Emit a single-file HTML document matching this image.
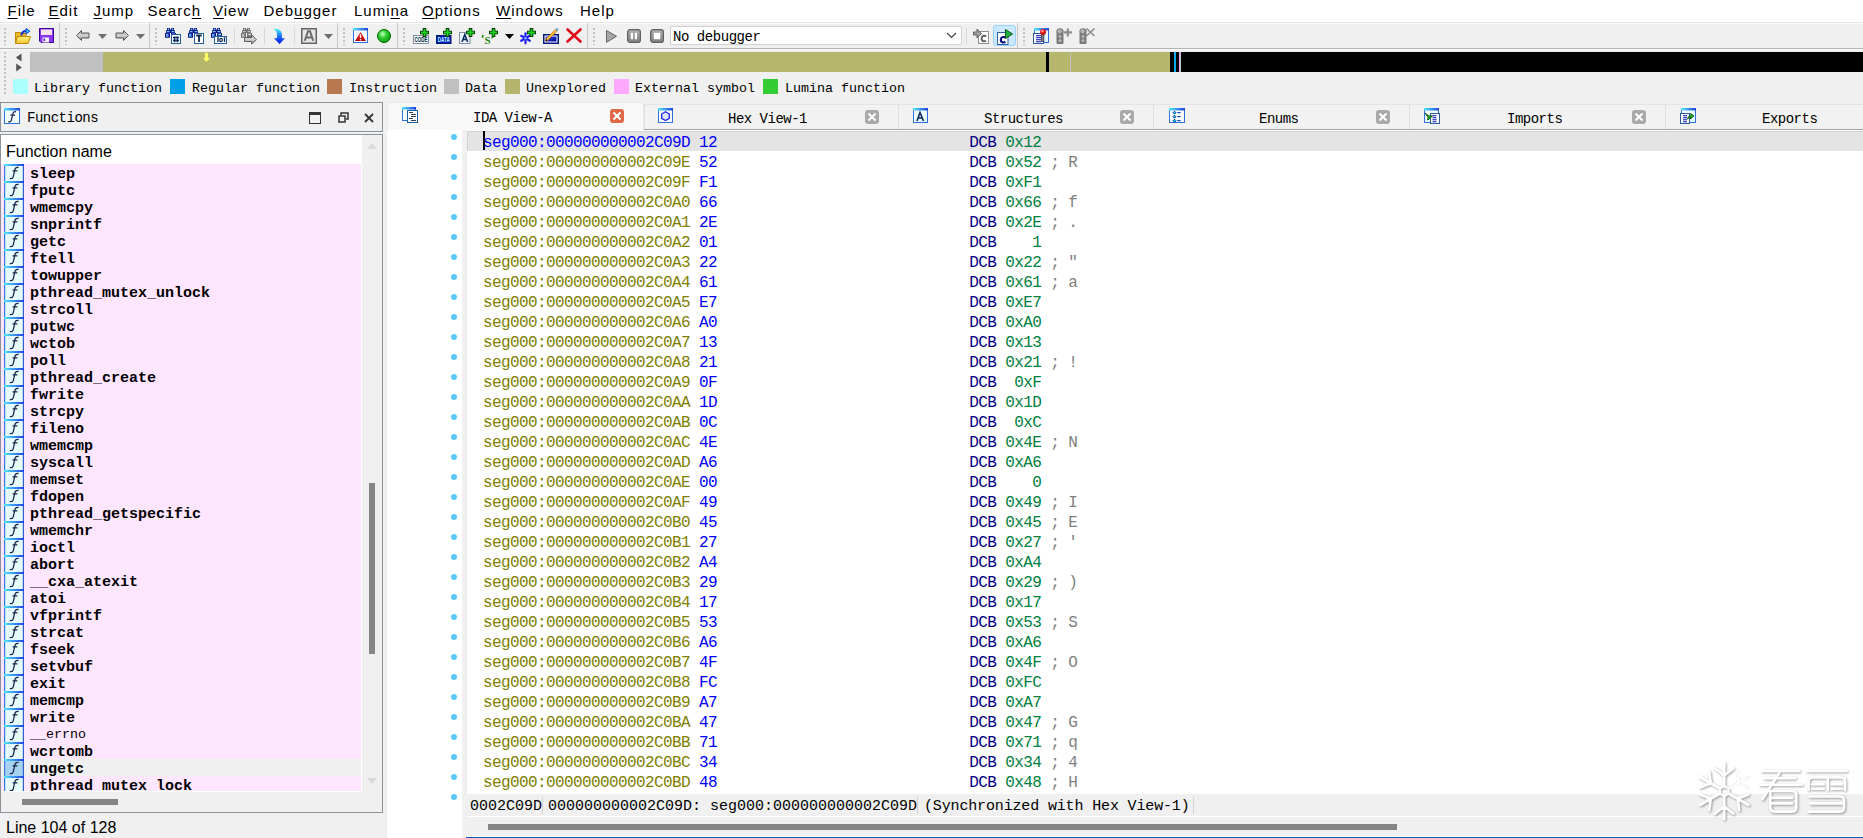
<!DOCTYPE html>
<html><head><meta charset="utf-8"><style>
*{box-sizing:border-box;margin:0;padding:0}
html,body{width:1863px;height:838px;overflow:hidden;background:#f0f0f0;position:relative}
.a{position:absolute}
.sans{font-family:"Liberation Sans",sans-serif}
.mono{font-family:"Liberation Mono",monospace}
.menu{position:absolute;top:0;font:15px/22px "Liberation Sans",sans-serif;letter-spacing:1px;color:#000;white-space:pre}
.menu u{text-decoration:underline;text-underline-offset:2px}
.grip{position:absolute;width:2px;background:repeating-linear-gradient(to bottom,#c2c2c2 0 2px,transparent 2px 4px)}
.sep{position:absolute;width:1px;background:#c8c8c8}
.sep2{position:absolute;width:1px;background:#d8d8d8}
.sq{position:absolute;top:79px;width:15px;height:15px}
.lg{position:absolute;top:80px;font:13.33px/18px "Liberation Mono",monospace;color:#000;white-space:pre}
.frow{position:absolute;left:1px;width:360px;height:17px;background:#ffe6ff}
.fic{position:absolute;left:4px;top:0;width:19px;height:17px;border:1.5px solid #3a78d8;background:linear-gradient(#f4ffff,#d8f4f8)}
.fic i{position:absolute;left:3px;top:-2px;font:italic 15px/17px "Liberation Serif",serif;color:#222}
.ft{position:absolute;left:30px;top:0;font:bold 15px/21px "Liberation Mono",monospace;color:#000;white-space:pre}
.crow{position:absolute;left:467px;width:1396px;height:20px;font:16px/25px "Liberation Mono",monospace;letter-spacing:-0.6px;white-space:pre}
.dot{position:absolute;left:451px;width:6px;height:6px;border-radius:50%;background:#5cc8f8}
.tab{position:absolute;top:104px;height:25px;background:#f2f2f2;border-top:1px solid #e4e4e4}
.tabt{position:absolute;top:0;font:14px/30px "Liberation Mono",monospace;color:#000;white-space:pre;letter-spacing:-0.5px}
.cls{position:absolute;top:6px;width:14px;height:14px;border-radius:3px;background:#a9a9a9}
.cls:before,.cls:after{content:"";position:absolute;left:6px;top:2px;width:2px;height:10px;background:#fff;transform:rotate(45deg)}
.cls:after{transform:rotate(-45deg)}
</style></head><body>

<svg width="0" height="0" style="position:absolute"><defs>
<linearGradient id="gfold" x1="0" y1="0" x2="0" y2="1"><stop offset="0" stop-color="#fff27a"/><stop offset="1" stop-color="#f2c530"/></linearGradient>
<linearGradient id="ggray" x1="0" y1="0" x2="0" y2="1"><stop offset="0" stop-color="#a0a0a0"/><stop offset="0.5" stop-color="#d4d4d4"/><stop offset="1" stop-color="#808080"/></linearGradient>
<linearGradient id="gblue" x1="0" y1="0" x2="0" y2="1"><stop offset="0" stop-color="#40f0ff"/><stop offset="0.5" stop-color="#2070f8"/><stop offset="1" stop-color="#0010e0"/></linearGradient>
<linearGradient id="gtube" x1="0" y1="0" x2="0" y2="1"><stop offset="0" stop-color="#2050b0"/><stop offset="0.6" stop-color="#60b0ff"/><stop offset="1" stop-color="#1030a0"/></linearGradient>
<linearGradient id="gtubeg" x1="0" y1="0" x2="0" y2="1"><stop offset="0" stop-color="#808080"/><stop offset="0.6" stop-color="#d0d0d0"/><stop offset="1" stop-color="#707070"/></linearGradient>
<linearGradient id="gtitle" x1="0" y1="0" x2="1" y2="0"><stop offset="0" stop-color="#50e8ff"/><stop offset="1" stop-color="#2040e0"/></linearGradient>
<linearGradient id="gwin" x1="0" y1="0" x2="1" y2="1"><stop offset="0" stop-color="#ffffff"/><stop offset="1" stop-color="#e0fcff"/></linearGradient>
<radialGradient id="gball" cx="0.4" cy="0.35" r="0.65"><stop offset="0" stop-color="#c8ffc8"/><stop offset="0.45" stop-color="#30d030"/><stop offset="1" stop-color="#10a010"/></radialGradient>
<radialGradient id="gred" cx="0.4" cy="0.35" r="0.65"><stop offset="0" stop-color="#ffd0d0"/><stop offset="0.45" stop-color="#ff2020"/><stop offset="1" stop-color="#c00000"/></radialGradient>
<linearGradient id="gpen" x1="0" y1="0" x2="1" y2="1"><stop offset="0" stop-color="#3050f0"/><stop offset="1" stop-color="#000090"/></linearGradient>
<linearGradient id="gbtn" x1="0" y1="0" x2="0" y2="1"><stop offset="0" stop-color="#b0b0b0"/><stop offset="1" stop-color="#808080"/></linearGradient>
<linearGradient id="gwarn" x1="0" y1="0" x2="0" y2="1"><stop offset="0" stop-color="#ff3030"/><stop offset="1" stop-color="#b00000"/></linearGradient>
</defs></svg>
<div class="a" style="left:0;top:0;width:1863px;height:22px;background:#fff"></div>
<div class="a" style="left:0;top:22px;width:1863px;height:1px;background:#e6e6e6"></div>
<div class="a" style="left:0;top:23px;width:1863px;height:1px;background:#fbfbfb"></div>
<div class="menu" style="left:7.5px"><u>F</u>ile</div>
<div class="menu" style="left:48.5px"><u>E</u>dit</div>
<div class="menu" style="left:93.5px"><u>J</u>ump</div>
<div class="menu" style="left:147.5px">Searc<u>h</u></div>
<div class="menu" style="left:213px"><u>V</u>iew</div>
<div class="menu" style="left:263.5px">Deb<u>u</u>gger</div>
<div class="menu" style="left:354px">Lumi<u>n</u>a</div>
<div class="menu" style="left:422px"><u>O</u>ptions</div>
<div class="menu" style="left:496px"><u>W</u>indows</div>
<div class="menu" style="left:580px">Help</div>
<div class="a" style="left:0;top:48px;width:1863px;height:1px;background:#b4b4b4"></div>
<div class="a" style="left:0;top:49px;width:1863px;height:1px;background:#f8f8f8"></div>
<div class="grip" style="left:4px;top:28px;height:17px"></div>
<div class="grip" style="left:65px;top:28px;height:17px"></div>
<div class="grip" style="left:155px;top:28px;height:17px"></div>
<div class="grip" style="left:343px;top:28px;height:17px"></div>
<div class="grip" style="left:403px;top:28px;height:17px"></div>
<div class="grip" style="left:593px;top:28px;height:17px"></div>
<div class="grip" style="left:1023px;top:28px;height:17px"></div>
<div class="sep" style="left:59px;top:23px;height:25px"></div>
<div class="sep" style="left:149px;top:23px;height:25px"></div>
<div class="sep" style="left:337px;top:23px;height:25px"></div>
<div class="sep" style="left:397px;top:23px;height:25px"></div>
<div class="sep" style="left:587px;top:23px;height:25px"></div>
<div class="sep" style="left:1017px;top:23px;height:25px"></div>
<div class="sep2" style="left:234px;top:28px;height:16px"></div>
<div class="sep2" style="left:264px;top:28px;height:16px"></div>
<div class="sep2" style="left:294px;top:28px;height:16px"></div>
<div class="sep2" style="left:966px;top:28px;height:16px"></div>
<div class="a" style="left:993px;top:25px;width:23px;height:21px;background:#cce8ff;border:1px solid #99d1ff;border-radius:3px"></div>
<svg class="a" style="left:15px;top:28px;overflow:visible" width="16" height="16" viewBox="0 0 16 16"><path d="M0.5 4.5 H5.5 L6.5 5.5 H11 V8.5 H2.5 L0.5 15.5 Z" fill="#eebc28" stroke="#c08800"/><path d="M2.5 8.5 H15.5 L13 15.5 H0.5 Z" fill="url(#gfold)" stroke="#c08800"/><path d="M6.5 7.5 C6.5 4.5 8.5 3 11.5 3" fill="none" stroke="#1030d0" stroke-width="2"/><path d="M11 0.5 L14.8 3.2 L11 6 Z" fill="#30e0ff" stroke="#1030d0" stroke-width="1"/></svg><svg class="a" style="left:39px;top:28px;overflow:visible" width="16" height="16" viewBox="0 0 16 16"><path d="M0.5 0.5 H14.5 V14.5 H2 L0.5 13 Z" fill="#8a38f0" stroke="#3c0098"/><rect x="2" y="1.5" width="11" height="5.5" fill="#f6e4ea"/><rect x="3.5" y="9.5" width="6.5" height="5" fill="#f2f2ff"/><rect x="4.5" y="10.5" width="1.6" height="2.6" fill="#5020c0"/></svg><svg class="a" style="left:76px;top:30px;overflow:visible" width="14" height="11" viewBox="0 0 14 11"><path d="M0.5 5.5 L5.5 0.5 V3 H13 V8 H5.5 V10.5 Z" fill="url(#ggray)" stroke="#5a5a5a"/></svg><svg class="a" style="left:115px;top:30px;overflow:visible" width="14" height="11" viewBox="0 0 14 11"><path d="M13.5 5.5 L8.5 0.5 V3 H1 V8 H8.5 V10.5 Z" fill="url(#ggray)" stroke="#5a5a5a"/></svg><svg class="a" style="left:98px;top:34px;overflow:visible" width="9" height="5" viewBox="0 0 9 5"><path d="M0 0 H9 L4.5 5 Z" fill="#6e6e72"/></svg><svg class="a" style="left:136px;top:34px;overflow:visible" width="9" height="5" viewBox="0 0 9 5"><path d="M0 0 H9 L4.5 5 Z" fill="#6e6e72"/></svg><svg class="a" style="left:324px;top:34px;overflow:visible" width="9" height="5" viewBox="0 0 9 5"><path d="M0 0 H9 L4.5 5 Z" fill="#6e6e72"/></svg><svg class="a" style="left:505px;top:34px;overflow:visible" width="9" height="5" viewBox="0 0 9 5"><path d="M0 0 H9 L4.5 5 Z" fill="#000"/></svg><svg class="a" style="left:165px;top:28px;overflow:visible" width="16" height="16" viewBox="0 0 16 16"><g transform="translate(0,0)"><path d="M2 0 H5 V2.3 H5.3 V4.9 H5 V9.8 H0 V4.9 H1 V2.3 H2 Z" fill="#0c1a88"/><path d="M6 0 H9 V2.3 H10 V4.9 H11 V9.8 H6 V4.9 H6 V2.3 H6 Z" fill="#0c1a88"/><rect x="5" y="1.5" width="1" height="4" fill="#0c1a88"/><circle cx="3.5" cy="1.3" r="0.8" fill="#8cd8ff"/><circle cx="7.5" cy="1.3" r="0.8" fill="#8cd8ff"/><rect x="1.8" y="3.1" width="2.8" height="1.1" fill="#8cd8ff"/><rect x="6.6" y="3.1" width="2.8" height="1.1" fill="#8cd8ff"/><rect x="1" y="5.6" width="2.8" height="3.4" fill="#3060d0"/><rect x="1.4" y="5.8" width="1.2" height="2.6" fill="#8cd8ff"/><rect x="7.4" y="5.6" width="2.6" height="1.8" fill="#8cd8ff"/><circle cx="5.5" cy="5.6" r="0.7" fill="#ffffff"/></g><rect x="6.5" y="6.5" width="9" height="9" fill="#fff" stroke="#1f5f9f"/><path d="M9.6 8.5 V14.3 M12.4 8.5 V14.3 M8 9.6 H14 M8 12.4 H14" stroke="#0a2e60" stroke-width="1.5"/></svg><svg class="a" style="left:188px;top:28px;overflow:visible" width="16" height="16" viewBox="0 0 16 16"><g transform="translate(0,0)"><path d="M2 0 H5 V2.3 H5.3 V4.9 H5 V9.8 H0 V4.9 H1 V2.3 H2 Z" fill="#0c1a88"/><path d="M6 0 H9 V2.3 H10 V4.9 H11 V9.8 H6 V4.9 H6 V2.3 H6 Z" fill="#0c1a88"/><rect x="5" y="1.5" width="1" height="4" fill="#0c1a88"/><circle cx="3.5" cy="1.3" r="0.8" fill="#8cd8ff"/><circle cx="7.5" cy="1.3" r="0.8" fill="#8cd8ff"/><rect x="1.8" y="3.1" width="2.8" height="1.1" fill="#8cd8ff"/><rect x="6.6" y="3.1" width="2.8" height="1.1" fill="#8cd8ff"/><rect x="1" y="5.6" width="2.8" height="3.4" fill="#3060d0"/><rect x="1.4" y="5.8" width="1.2" height="2.6" fill="#8cd8ff"/><rect x="7.4" y="5.6" width="2.6" height="1.8" fill="#8cd8ff"/><circle cx="5.5" cy="5.6" r="0.7" fill="#ffffff"/></g><rect x="6.5" y="5.5" width="9" height="10" fill="#fff" stroke="#1f5f9f"/><path d="M8.3 7.5 H13.7 M11 7.5 V14" stroke="#0a2850" stroke-width="1.8"/></svg><svg class="a" style="left:211px;top:28px;overflow:visible" width="16" height="16" viewBox="0 0 16 16"><g transform="translate(0,0)"><path d="M2 0 H5 V2.3 H5.3 V4.9 H5 V9.8 H0 V4.9 H1 V2.3 H2 Z" fill="#0c1a88"/><path d="M6 0 H9 V2.3 H10 V4.9 H11 V9.8 H6 V4.9 H6 V2.3 H6 Z" fill="#0c1a88"/><rect x="5" y="1.5" width="1" height="4" fill="#0c1a88"/><circle cx="3.5" cy="1.3" r="0.8" fill="#8cd8ff"/><circle cx="7.5" cy="1.3" r="0.8" fill="#8cd8ff"/><rect x="1.8" y="3.1" width="2.8" height="1.1" fill="#8cd8ff"/><rect x="6.6" y="3.1" width="2.8" height="1.1" fill="#8cd8ff"/><rect x="1" y="5.6" width="2.8" height="3.4" fill="#3060d0"/><rect x="1.4" y="5.8" width="1.2" height="2.6" fill="#8cd8ff"/><rect x="7.4" y="5.6" width="2.6" height="1.8" fill="#8cd8ff"/><circle cx="5.5" cy="5.6" r="0.7" fill="#ffffff"/></g><rect x="3.5" y="8.5" width="12" height="7" fill="#fff" stroke="#1f5f9f"/><path d="M6.3 10.5 L7 10 V14 M12.8 10.5 L13.5 10 V14" stroke="#0a2850" stroke-width="1.3" fill="none"/><ellipse cx="10" cy="12" rx="1.3" ry="1.7" fill="none" stroke="#0a2850" stroke-width="1.2"/></svg><svg class="a" style="left:241px;top:28px;overflow:visible" width="16" height="16" viewBox="0 0 16 16"><g transform="translate(0,0)"><path d="M2 0 H5 V2.3 H5.3 V4.9 H5 V9.8 H0 V4.9 H1 V2.3 H2 Z" fill="#6a6a6a"/><path d="M6 0 H9 V2.3 H10 V4.9 H11 V9.8 H6 V4.9 H6 V2.3 H6 Z" fill="#6a6a6a"/><rect x="5" y="1.5" width="1" height="4" fill="#6a6a6a"/><circle cx="3.5" cy="1.3" r="0.8" fill="#d8d8d8"/><circle cx="7.5" cy="1.3" r="0.8" fill="#d8d8d8"/><rect x="1.8" y="3.1" width="2.8" height="1.1" fill="#d8d8d8"/><rect x="6.6" y="3.1" width="2.8" height="1.1" fill="#d8d8d8"/><rect x="1" y="5.6" width="2.8" height="3.4" fill="#9a9a9a"/><rect x="1.4" y="5.8" width="1.2" height="2.6" fill="#d8d8d8"/><rect x="7.4" y="5.6" width="2.6" height="1.8" fill="#d8d8d8"/><circle cx="5.5" cy="5.6" r="0.7" fill="#ffffff"/></g><path d="M3.5 9.5 H10.5 V6.5 L15.5 11.8 L10.5 16 V13.5 H3.5 Z" fill="url(#ggray)" stroke="#606060"/></svg><svg class="a" style="left:273px;top:28px;overflow:visible" width="12" height="16" viewBox="0 0 12 16"><path d="M0.5 0.8 C5.5 0.5 9 2.5 9 7 V10.2 H12 L6.5 16 L0.8 10.2 H4 V7 C4 4.3 3 2.2 0.5 0.8 Z" fill="url(#gblue)"/></svg><svg class="a" style="left:301px;top:28px;overflow:visible" width="16" height="16" viewBox="0 0 16 16"><rect x="0.75" y="0.75" width="14.5" height="14.5" fill="#e6e6e6" stroke="#646464" stroke-width="1.5"/><path d="M3.8 12.8 L7 3.2 H9 L12.2 12.8 M5 9.6 H11" fill="none" stroke="#6a6a6a" stroke-width="2"/></svg><svg class="a" style="left:353px;top:28px;overflow:visible" width="15" height="15" viewBox="0 0 15 15"><rect x="0.5" y="0.5" width="14" height="14" fill="#fff" stroke="#2f6fe0" stroke-width="1"/><rect x="0" y="0" width="15" height="2.5" fill="url(#gtitle)"/><path d="M7.5 4 L13 13 H2 Z" fill="url(#gwarn)"/><path d="M7.5 6.5 V10" stroke="#fff" stroke-width="1.4"/><rect x="6.8" y="11" width="1.4" height="1.4" fill="#fff"/></svg><svg class="a" style="left:377px;top:29px;overflow:visible" width="14" height="14" viewBox="0 0 14 14"><circle cx="7" cy="7" r="6.5" fill="url(#gball)" stroke="#006400" stroke-width="1"/></svg><svg class="a" style="left:413px;top:28px;overflow:visible" width="17" height="16" viewBox="0 0 17 16"><rect x="0.5" y="7.5" width="15" height="8" fill="#f4f8ff" stroke="#8090a0"/><text x="8" y="14.3" font-family="Liberation Sans" font-weight="bold" font-size="7" text-anchor="middle" fill="#002838" textLength="13" lengthAdjust="spacingAndGlyphs">CODE</text><g transform="translate(7,0)"><path d="M4.5 0 V9 M0 4.5 H9" stroke="#003800" stroke-width="3.6"/><path d="M4.5 1 V8 M1 4.5 H8" stroke="#20d020" stroke-width="1.8"/></g></svg><svg class="a" style="left:436px;top:28px;overflow:visible" width="17" height="16" viewBox="0 0 17 16"><rect x="0.5" y="7.5" width="14.5" height="8" fill="#0818c8" stroke="#002060"/><text x="7.8" y="14" font-family="Liberation Sans" font-weight="bold" font-size="7" text-anchor="middle" fill="#b0ffff" textLength="12" lengthAdjust="spacingAndGlyphs">DATA</text><g transform="translate(7,0)"><path d="M4.5 0 V9 M0 4.5 H9" stroke="#003800" stroke-width="3.6"/><path d="M4.5 1 V8 M1 4.5 H8" stroke="#20d020" stroke-width="1.8"/></g></svg><svg class="a" style="left:459px;top:28px;overflow:visible" width="17" height="16" viewBox="0 0 17 16"><rect x="0.5" y="4.5" width="10.5" height="11" fill="#f0f6ff" stroke="#8090a0"/><path d="M3 14 L5.8 6.5 L8.6 14 M4 11.5 H7.6" fill="none" stroke="#0a2a60" stroke-width="1.6"/><g transform="translate(7,0)"><path d="M4.5 0 V9 M0 4.5 H9" stroke="#003800" stroke-width="3.6"/><path d="M4.5 1 V8 M1 4.5 H8" stroke="#20d020" stroke-width="1.8"/></g></svg><svg class="a" style="left:481px;top:28px;overflow:visible" width="17" height="16" viewBox="0 0 17 16"><text x="6.5" y="15.8" font-family="Liberation Serif" font-weight="bold" font-size="11" text-anchor="middle" fill="#2a8a10">S</text><path d="M2.2 9.5 Q0.6 8.6 2.4 7.2 M10.6 10 Q12.6 9.6 11.4 8" stroke="#2a8a10" stroke-width="1.6" fill="none"/><g transform="translate(8,0)"><path d="M4.5 0 V9 M0 4.5 H9" stroke="#003800" stroke-width="3.6"/><path d="M4.5 1 V8 M1 4.5 H8" stroke="#20d020" stroke-width="1.8"/></g></svg><svg class="a" style="left:520px;top:28px;overflow:visible" width="17" height="16" viewBox="0 0 17 16"><path d="M5.5 10.3 L5.50 15.30" stroke="#2020f0" stroke-width="2.2" stroke-linecap="round"/><path d="M5.5 10.3 L1.17 12.80" stroke="#2020f0" stroke-width="2.2" stroke-linecap="round"/><path d="M5.5 10.3 L1.17 7.80" stroke="#2020f0" stroke-width="2.2" stroke-linecap="round"/><path d="M5.5 10.3 L5.50 5.30" stroke="#2020f0" stroke-width="2.2" stroke-linecap="round"/><path d="M5.5 10.3 L9.83 7.80" stroke="#2020f0" stroke-width="2.2" stroke-linecap="round"/><path d="M5.5 10.3 L9.83 12.80" stroke="#2020f0" stroke-width="2.2" stroke-linecap="round"/><circle cx="5.5" cy="10.3" r="1.3" fill="#80b0ff"/><g transform="translate(7,0)"><path d="M4.5 0 V9 M0 4.5 H9" stroke="#003800" stroke-width="3.6"/><path d="M4.5 1 V8 M1 4.5 H8" stroke="#20d020" stroke-width="1.8"/></g></svg><svg class="a" style="left:543px;top:28px;overflow:visible" width="16" height="16" viewBox="0 0 16 16"><rect x="0.75" y="6.75" width="14.5" height="8.5" fill="#fff" stroke="#001880" stroke-width="1.5"/><rect x="2.5" y="8.5" width="11" height="5" fill="url(#gpen)"/><path d="M3.5 12 L13.5 2" stroke="#d07010" stroke-width="2.6" stroke-linecap="round"/><path d="M3.5 12 L13.5 2" stroke="#ffd040" stroke-width="1.2"/><circle cx="14" cy="1.6" r="1.4" fill="#60b0e0"/><path d="M2.8 12.8 L4 11.6" stroke="#000" stroke-width="1.2"/></svg><svg class="a" style="left:566px;top:28px;overflow:visible" width="16" height="15" viewBox="0 0 16 15"><path d="M1.5 1.5 L14.5 13.5 M14.5 1.5 L1.5 13.5" stroke="#e00818" stroke-width="2.6" stroke-linecap="round"/></svg><svg class="a" style="left:606px;top:30px;overflow:visible" width="11" height="13" viewBox="0 0 11 13"><path d="M0.5 0.5 L10.5 6.3 L0.5 12.3 Z" fill="#a6a6a6" stroke="#646464"/></svg><svg class="a" style="left:627px;top:29px;overflow:visible" width="14" height="14" viewBox="0 0 14 14"><rect x="0.6" y="0.6" width="12.8" height="12.8" rx="2.5" fill="url(#gbtn)" stroke="#606060" stroke-width="1.2"/><rect x="3.8" y="3.8" width="2.2" height="6.4" fill="#fff"/><rect x="7.8" y="3.8" width="2.2" height="6.4" fill="#fff"/></svg><svg class="a" style="left:650px;top:29px;overflow:visible" width="14" height="14" viewBox="0 0 14 14"><rect x="0.6" y="0.6" width="12.8" height="12.8" rx="2.5" fill="url(#gbtn)" stroke="#606060" stroke-width="1.2"/><rect x="3.8" y="3.8" width="6.4" height="6.4" fill="#fff"/></svg><svg class="a" style="left:973px;top:28px;overflow:visible" width="16" height="16" viewBox="0 0 16 16"><rect x="5.5" y="3.5" width="10" height="12" fill="#fff" stroke="#909090"/><path d="M0.5 4 H4 V1 L8.5 5.5 L4 10 V7 H0.5 Z" fill="#a0a0a0" stroke="#606060"/><path d="M13 8.6 C12.2 7.4 9 7.2 8.6 10.4 C8.4 13.4 11.6 14 13 12.6" fill="none" stroke="#606060" stroke-width="2"/></svg><svg class="a" style="left:997px;top:29px;overflow:visible" width="16" height="16" viewBox="0 0 16 16"><rect x="0.5" y="3.5" width="10.5" height="12" fill="#fff" stroke="#3060a0"/><path d="M8.4 8.9 C7.6 7.6 4.2 7.4 3.8 10.6 C3.6 13.6 7 14.2 8.4 12.8" fill="none" stroke="#0a0a80" stroke-width="2.1"/><path d="M8.5 0.5 L15.5 5 L8.5 9.5 Z" fill="#20b040" stroke="#0a5010"/></svg><svg class="a" style="left:1033px;top:28px;overflow:visible" width="16" height="16" viewBox="0 0 16 16"><g transform="translate(1,0)"><rect x="0.5" y="0.5" width="14" height="14" fill="url(#gwin)" stroke="#2f6fe0" stroke-width="1"/><rect x="0" y="0" width="15" height="2.5" fill="url(#gtitle)"/></g><rect x="0.5" y="5.5" width="10" height="10" fill="#fff" stroke="#2a5a9a"/><path d="M3 7.8 H8 M3 9.8 H8 M3 11.8 H8 M3 13.8 H8" stroke="#0010b0" stroke-width="1.1"/><rect x="8.3" y="6.5" width="2.6" height="7" fill="#808080" stroke="#202040" stroke-width="0.6"/><circle cx="10" cy="4" r="3" fill="url(#gred)"/></svg><svg class="a" style="left:1056px;top:28px;overflow:visible" width="16" height="16" viewBox="0 0 16 16"><rect x="0.5" y="5" width="7" height="11" rx="1" fill="#787878"/><ellipse cx="4" cy="3.8" rx="3.7" ry="3.5" fill="#7e7e7e"/><circle cx="4" cy="8.6" r="1.6" fill="#b4b4b4"/><circle cx="4" cy="12.6" r="1.6" fill="#b4b4b4"/><circle cx="3.6" cy="3.2" r="2" fill="#b8b8b8"/><path d="M8 4.3 H16 M11.8 0.5 V8.5" stroke="#8a8a8a" stroke-width="2.2"/></svg><svg class="a" style="left:1079px;top:28px;overflow:visible" width="16" height="16" viewBox="0 0 16 16"><rect x="0.5" y="5" width="7" height="11" rx="1" fill="#787878"/><ellipse cx="4" cy="3.8" rx="3.7" ry="3.5" fill="#7e7e7e"/><circle cx="4" cy="8.6" r="1.6" fill="#b4b4b4"/><circle cx="4" cy="12.6" r="1.6" fill="#b4b4b4"/><circle cx="3.6" cy="3.2" r="2" fill="#b8b8b8"/><path d="M7.5 0.5 L15.5 8 M15.5 0.5 L7.5 8" stroke="#8a8a8a" stroke-width="1.6"/></svg>
<div class="a" style="left:670px;top:26px;width:292px;height:19px;background:#fff;border:1px solid #d0d0d0;border-radius:2px"></div>
<div class="a mono" style="left:673px;top:28px;font-size:14px;letter-spacing:-0.45px;line-height:19px;white-space:pre">No debugger</div>
<svg class="a" style="left:946px;top:32px" width="11" height="7"><path d="M1 1 L5.5 5.5 L10 1" fill="none" stroke="#404040" stroke-width="1.2"/></svg>
<div class="grip" style="left:4px;top:52px;height:44px"></div>
<svg class="a" style="left:15px;top:52px" width="10" height="21"><path d="M6.5 1.6 L0.8 5.6 L6.5 9.6 Z M1.2 11.6 L6.9 15.6 L1.2 19.6 Z" fill="#555"/></svg>
<div class="a" style="left:30px;top:52px;width:1833px;height:20px;background:#b6b66c"></div>
<div class="a" style="left:30px;top:52px;width:73px;height:20px;background:#c0c0c0"></div>
<svg class="a" style="left:203px;top:53px" width="7" height="9"><path d="M2 0 H5 V5 H7 L3.5 9 L0 5 H2 Z" fill="#ffff66"/></svg>
<div class="a" style="left:1046px;top:52px;width:3px;height:20px;background:#000"></div>
<div class="a" style="left:1070px;top:52px;width:1px;height:20px;background:#c0c0c0"></div>
<div class="a" style="left:1170px;top:52px;width:693px;height:20px;background:#000"></div>
<div class="a" style="left:1174px;top:52px;width:2px;height:20px;background:#00a8f0"></div>
<div class="a" style="left:1179px;top:52px;width:1px;height:20px;background:#ffa8ff"></div>
<div class="a" style="left:1180px;top:52px;width:1px;height:20px;background:#c0c0c0"></div>
<div class="sq" style="left:13px;background:#aaffff"></div><div class="lg" style="left:34px">Library function</div>
<div class="sq" style="left:170px;background:#00a0e8"></div><div class="lg" style="left:192px">Regular function</div>
<div class="sq" style="left:327px;background:#b87850"></div><div class="lg" style="left:349px">Instruction</div>
<div class="sq" style="left:444px;background:#c0c0c0"></div><div class="lg" style="left:465px">Data</div>
<div class="sq" style="left:505px;background:#b4b46c"></div><div class="lg" style="left:526px">Unexplored</div>
<div class="sq" style="left:614px;background:#ffa8ff"></div><div class="lg" style="left:635px">External symbol</div>
<div class="sq" style="left:763px;background:#33cc33"></div><div class="lg" style="left:785px">Lumina function</div>
<div class="a" style="left:0;top:102px;width:383px;height:30px;border:1px solid #8c929a;background:#f0f0f0"></div>
<div class="a mono" style="left:27px;top:104px;font-size:14px;letter-spacing:-0.5px;line-height:29px;white-space:pre">Functions</div>
<div class="a" style="left:309px;top:112px;width:12px;height:12px;border:1.5px solid #333;border-top-width:3px"></div>
<svg class="a" style="left:338px;top:112px" width="11" height="11"><path d="M3 3 V1 H10 V7 H8" fill="none" stroke="#333" stroke-width="1.5"/><rect x="1" y="4" width="6" height="6" fill="none" stroke="#333" stroke-width="1.5"/></svg>
<svg class="a" style="left:364px;top:113px" width="10" height="10"><path d="M1 1 L9 9 M9 1 L1 9" stroke="#333" stroke-width="1.8"/></svg>
<div class="a" style="left:0;top:134px;width:383px;height:679px;border:1px solid #8c929a;background:#f0f0f0"></div>
<div class="a" style="left:1px;top:135px;width:361px;height:657px;background:#fff"></div>
<div class="a sans" style="left:6px;top:141.5px;font-size:16px;line-height:20px;white-space:pre">Function name</div>
<div class="a" style="left:1px;top:164px;width:360px;height:627px;overflow:hidden">
<div class="frow" style="left:0;top:0px;background:#ffe6ff"><svg class="a" style="left:3px;top:0" width="20" height="17" viewBox="0 0 20 17"><rect x="0.5" y="0" width="19" height="17" fill="#e6fbfb"/><rect x="0" y="0" width="1.2" height="17" fill="#3a7ae0"/><rect x="18.8" y="0" width="1.2" height="17" fill="#3060d0"/><rect x="0" y="0" width="20" height="2" fill="url(#gtitle)"/><path d="M14.6 3.4 C12.6 3 11.3 3.8 10.9 5.6 L9.3 12.6 C8.9 14.4 7.8 15 5.8 14.6 M8.6 6.8 H13.4" fill="none" stroke="#1a2248" stroke-width="1.25"/></svg><div class="ft" style="left:29px;">sleep</div></div>
<div class="frow" style="left:0;top:17px;background:#ffe6ff"><svg class="a" style="left:3px;top:0" width="20" height="17" viewBox="0 0 20 17"><rect x="0.5" y="0" width="19" height="17" fill="#e6fbfb"/><rect x="0" y="0" width="1.2" height="17" fill="#3a7ae0"/><rect x="18.8" y="0" width="1.2" height="17" fill="#3060d0"/><rect x="0" y="0" width="20" height="2" fill="url(#gtitle)"/><path d="M14.6 3.4 C12.6 3 11.3 3.8 10.9 5.6 L9.3 12.6 C8.9 14.4 7.8 15 5.8 14.6 M8.6 6.8 H13.4" fill="none" stroke="#1a2248" stroke-width="1.25"/></svg><div class="ft" style="left:29px;">fputc</div></div>
<div class="frow" style="left:0;top:34px;background:#ffe6ff"><svg class="a" style="left:3px;top:0" width="20" height="17" viewBox="0 0 20 17"><rect x="0.5" y="0" width="19" height="17" fill="#e6fbfb"/><rect x="0" y="0" width="1.2" height="17" fill="#3a7ae0"/><rect x="18.8" y="0" width="1.2" height="17" fill="#3060d0"/><rect x="0" y="0" width="20" height="2" fill="url(#gtitle)"/><path d="M14.6 3.4 C12.6 3 11.3 3.8 10.9 5.6 L9.3 12.6 C8.9 14.4 7.8 15 5.8 14.6 M8.6 6.8 H13.4" fill="none" stroke="#1a2248" stroke-width="1.25"/></svg><div class="ft" style="left:29px;">wmemcpy</div></div>
<div class="frow" style="left:0;top:51px;background:#ffe6ff"><svg class="a" style="left:3px;top:0" width="20" height="17" viewBox="0 0 20 17"><rect x="0.5" y="0" width="19" height="17" fill="#e6fbfb"/><rect x="0" y="0" width="1.2" height="17" fill="#3a7ae0"/><rect x="18.8" y="0" width="1.2" height="17" fill="#3060d0"/><rect x="0" y="0" width="20" height="2" fill="url(#gtitle)"/><path d="M14.6 3.4 C12.6 3 11.3 3.8 10.9 5.6 L9.3 12.6 C8.9 14.4 7.8 15 5.8 14.6 M8.6 6.8 H13.4" fill="none" stroke="#1a2248" stroke-width="1.25"/></svg><div class="ft" style="left:29px;">snprintf</div></div>
<div class="frow" style="left:0;top:68px;background:#ffe6ff"><svg class="a" style="left:3px;top:0" width="20" height="17" viewBox="0 0 20 17"><rect x="0.5" y="0" width="19" height="17" fill="#e6fbfb"/><rect x="0" y="0" width="1.2" height="17" fill="#3a7ae0"/><rect x="18.8" y="0" width="1.2" height="17" fill="#3060d0"/><rect x="0" y="0" width="20" height="2" fill="url(#gtitle)"/><path d="M14.6 3.4 C12.6 3 11.3 3.8 10.9 5.6 L9.3 12.6 C8.9 14.4 7.8 15 5.8 14.6 M8.6 6.8 H13.4" fill="none" stroke="#1a2248" stroke-width="1.25"/></svg><div class="ft" style="left:29px;">getc</div></div>
<div class="frow" style="left:0;top:85px;background:#ffe6ff"><svg class="a" style="left:3px;top:0" width="20" height="17" viewBox="0 0 20 17"><rect x="0.5" y="0" width="19" height="17" fill="#e6fbfb"/><rect x="0" y="0" width="1.2" height="17" fill="#3a7ae0"/><rect x="18.8" y="0" width="1.2" height="17" fill="#3060d0"/><rect x="0" y="0" width="20" height="2" fill="url(#gtitle)"/><path d="M14.6 3.4 C12.6 3 11.3 3.8 10.9 5.6 L9.3 12.6 C8.9 14.4 7.8 15 5.8 14.6 M8.6 6.8 H13.4" fill="none" stroke="#1a2248" stroke-width="1.25"/></svg><div class="ft" style="left:29px;">ftell</div></div>
<div class="frow" style="left:0;top:102px;background:#ffe6ff"><svg class="a" style="left:3px;top:0" width="20" height="17" viewBox="0 0 20 17"><rect x="0.5" y="0" width="19" height="17" fill="#e6fbfb"/><rect x="0" y="0" width="1.2" height="17" fill="#3a7ae0"/><rect x="18.8" y="0" width="1.2" height="17" fill="#3060d0"/><rect x="0" y="0" width="20" height="2" fill="url(#gtitle)"/><path d="M14.6 3.4 C12.6 3 11.3 3.8 10.9 5.6 L9.3 12.6 C8.9 14.4 7.8 15 5.8 14.6 M8.6 6.8 H13.4" fill="none" stroke="#1a2248" stroke-width="1.25"/></svg><div class="ft" style="left:29px;">towupper</div></div>
<div class="frow" style="left:0;top:119px;background:#ffe6ff"><svg class="a" style="left:3px;top:0" width="20" height="17" viewBox="0 0 20 17"><rect x="0.5" y="0" width="19" height="17" fill="#e6fbfb"/><rect x="0" y="0" width="1.2" height="17" fill="#3a7ae0"/><rect x="18.8" y="0" width="1.2" height="17" fill="#3060d0"/><rect x="0" y="0" width="20" height="2" fill="url(#gtitle)"/><path d="M14.6 3.4 C12.6 3 11.3 3.8 10.9 5.6 L9.3 12.6 C8.9 14.4 7.8 15 5.8 14.6 M8.6 6.8 H13.4" fill="none" stroke="#1a2248" stroke-width="1.25"/></svg><div class="ft" style="left:29px;">pthread_mutex_unlock</div></div>
<div class="frow" style="left:0;top:136px;background:#ffe6ff"><svg class="a" style="left:3px;top:0" width="20" height="17" viewBox="0 0 20 17"><rect x="0.5" y="0" width="19" height="17" fill="#e6fbfb"/><rect x="0" y="0" width="1.2" height="17" fill="#3a7ae0"/><rect x="18.8" y="0" width="1.2" height="17" fill="#3060d0"/><rect x="0" y="0" width="20" height="2" fill="url(#gtitle)"/><path d="M14.6 3.4 C12.6 3 11.3 3.8 10.9 5.6 L9.3 12.6 C8.9 14.4 7.8 15 5.8 14.6 M8.6 6.8 H13.4" fill="none" stroke="#1a2248" stroke-width="1.25"/></svg><div class="ft" style="left:29px;">strcoll</div></div>
<div class="frow" style="left:0;top:153px;background:#ffe6ff"><svg class="a" style="left:3px;top:0" width="20" height="17" viewBox="0 0 20 17"><rect x="0.5" y="0" width="19" height="17" fill="#e6fbfb"/><rect x="0" y="0" width="1.2" height="17" fill="#3a7ae0"/><rect x="18.8" y="0" width="1.2" height="17" fill="#3060d0"/><rect x="0" y="0" width="20" height="2" fill="url(#gtitle)"/><path d="M14.6 3.4 C12.6 3 11.3 3.8 10.9 5.6 L9.3 12.6 C8.9 14.4 7.8 15 5.8 14.6 M8.6 6.8 H13.4" fill="none" stroke="#1a2248" stroke-width="1.25"/></svg><div class="ft" style="left:29px;">putwc</div></div>
<div class="frow" style="left:0;top:170px;background:#ffe6ff"><svg class="a" style="left:3px;top:0" width="20" height="17" viewBox="0 0 20 17"><rect x="0.5" y="0" width="19" height="17" fill="#e6fbfb"/><rect x="0" y="0" width="1.2" height="17" fill="#3a7ae0"/><rect x="18.8" y="0" width="1.2" height="17" fill="#3060d0"/><rect x="0" y="0" width="20" height="2" fill="url(#gtitle)"/><path d="M14.6 3.4 C12.6 3 11.3 3.8 10.9 5.6 L9.3 12.6 C8.9 14.4 7.8 15 5.8 14.6 M8.6 6.8 H13.4" fill="none" stroke="#1a2248" stroke-width="1.25"/></svg><div class="ft" style="left:29px;">wctob</div></div>
<div class="frow" style="left:0;top:187px;background:#ffe6ff"><svg class="a" style="left:3px;top:0" width="20" height="17" viewBox="0 0 20 17"><rect x="0.5" y="0" width="19" height="17" fill="#e6fbfb"/><rect x="0" y="0" width="1.2" height="17" fill="#3a7ae0"/><rect x="18.8" y="0" width="1.2" height="17" fill="#3060d0"/><rect x="0" y="0" width="20" height="2" fill="url(#gtitle)"/><path d="M14.6 3.4 C12.6 3 11.3 3.8 10.9 5.6 L9.3 12.6 C8.9 14.4 7.8 15 5.8 14.6 M8.6 6.8 H13.4" fill="none" stroke="#1a2248" stroke-width="1.25"/></svg><div class="ft" style="left:29px;">poll</div></div>
<div class="frow" style="left:0;top:204px;background:#ffe6ff"><svg class="a" style="left:3px;top:0" width="20" height="17" viewBox="0 0 20 17"><rect x="0.5" y="0" width="19" height="17" fill="#e6fbfb"/><rect x="0" y="0" width="1.2" height="17" fill="#3a7ae0"/><rect x="18.8" y="0" width="1.2" height="17" fill="#3060d0"/><rect x="0" y="0" width="20" height="2" fill="url(#gtitle)"/><path d="M14.6 3.4 C12.6 3 11.3 3.8 10.9 5.6 L9.3 12.6 C8.9 14.4 7.8 15 5.8 14.6 M8.6 6.8 H13.4" fill="none" stroke="#1a2248" stroke-width="1.25"/></svg><div class="ft" style="left:29px;">pthread_create</div></div>
<div class="frow" style="left:0;top:221px;background:#ffe6ff"><svg class="a" style="left:3px;top:0" width="20" height="17" viewBox="0 0 20 17"><rect x="0.5" y="0" width="19" height="17" fill="#e6fbfb"/><rect x="0" y="0" width="1.2" height="17" fill="#3a7ae0"/><rect x="18.8" y="0" width="1.2" height="17" fill="#3060d0"/><rect x="0" y="0" width="20" height="2" fill="url(#gtitle)"/><path d="M14.6 3.4 C12.6 3 11.3 3.8 10.9 5.6 L9.3 12.6 C8.9 14.4 7.8 15 5.8 14.6 M8.6 6.8 H13.4" fill="none" stroke="#1a2248" stroke-width="1.25"/></svg><div class="ft" style="left:29px;">fwrite</div></div>
<div class="frow" style="left:0;top:238px;background:#ffe6ff"><svg class="a" style="left:3px;top:0" width="20" height="17" viewBox="0 0 20 17"><rect x="0.5" y="0" width="19" height="17" fill="#e6fbfb"/><rect x="0" y="0" width="1.2" height="17" fill="#3a7ae0"/><rect x="18.8" y="0" width="1.2" height="17" fill="#3060d0"/><rect x="0" y="0" width="20" height="2" fill="url(#gtitle)"/><path d="M14.6 3.4 C12.6 3 11.3 3.8 10.9 5.6 L9.3 12.6 C8.9 14.4 7.8 15 5.8 14.6 M8.6 6.8 H13.4" fill="none" stroke="#1a2248" stroke-width="1.25"/></svg><div class="ft" style="left:29px;">strcpy</div></div>
<div class="frow" style="left:0;top:255px;background:#ffe6ff"><svg class="a" style="left:3px;top:0" width="20" height="17" viewBox="0 0 20 17"><rect x="0.5" y="0" width="19" height="17" fill="#e6fbfb"/><rect x="0" y="0" width="1.2" height="17" fill="#3a7ae0"/><rect x="18.8" y="0" width="1.2" height="17" fill="#3060d0"/><rect x="0" y="0" width="20" height="2" fill="url(#gtitle)"/><path d="M14.6 3.4 C12.6 3 11.3 3.8 10.9 5.6 L9.3 12.6 C8.9 14.4 7.8 15 5.8 14.6 M8.6 6.8 H13.4" fill="none" stroke="#1a2248" stroke-width="1.25"/></svg><div class="ft" style="left:29px;">fileno</div></div>
<div class="frow" style="left:0;top:272px;background:#ffe6ff"><svg class="a" style="left:3px;top:0" width="20" height="17" viewBox="0 0 20 17"><rect x="0.5" y="0" width="19" height="17" fill="#e6fbfb"/><rect x="0" y="0" width="1.2" height="17" fill="#3a7ae0"/><rect x="18.8" y="0" width="1.2" height="17" fill="#3060d0"/><rect x="0" y="0" width="20" height="2" fill="url(#gtitle)"/><path d="M14.6 3.4 C12.6 3 11.3 3.8 10.9 5.6 L9.3 12.6 C8.9 14.4 7.8 15 5.8 14.6 M8.6 6.8 H13.4" fill="none" stroke="#1a2248" stroke-width="1.25"/></svg><div class="ft" style="left:29px;">wmemcmp</div></div>
<div class="frow" style="left:0;top:289px;background:#ffe6ff"><svg class="a" style="left:3px;top:0" width="20" height="17" viewBox="0 0 20 17"><rect x="0.5" y="0" width="19" height="17" fill="#e6fbfb"/><rect x="0" y="0" width="1.2" height="17" fill="#3a7ae0"/><rect x="18.8" y="0" width="1.2" height="17" fill="#3060d0"/><rect x="0" y="0" width="20" height="2" fill="url(#gtitle)"/><path d="M14.6 3.4 C12.6 3 11.3 3.8 10.9 5.6 L9.3 12.6 C8.9 14.4 7.8 15 5.8 14.6 M8.6 6.8 H13.4" fill="none" stroke="#1a2248" stroke-width="1.25"/></svg><div class="ft" style="left:29px;">syscall</div></div>
<div class="frow" style="left:0;top:306px;background:#ffe6ff"><svg class="a" style="left:3px;top:0" width="20" height="17" viewBox="0 0 20 17"><rect x="0.5" y="0" width="19" height="17" fill="#e6fbfb"/><rect x="0" y="0" width="1.2" height="17" fill="#3a7ae0"/><rect x="18.8" y="0" width="1.2" height="17" fill="#3060d0"/><rect x="0" y="0" width="20" height="2" fill="url(#gtitle)"/><path d="M14.6 3.4 C12.6 3 11.3 3.8 10.9 5.6 L9.3 12.6 C8.9 14.4 7.8 15 5.8 14.6 M8.6 6.8 H13.4" fill="none" stroke="#1a2248" stroke-width="1.25"/></svg><div class="ft" style="left:29px;">memset</div></div>
<div class="frow" style="left:0;top:323px;background:#ffe6ff"><svg class="a" style="left:3px;top:0" width="20" height="17" viewBox="0 0 20 17"><rect x="0.5" y="0" width="19" height="17" fill="#e6fbfb"/><rect x="0" y="0" width="1.2" height="17" fill="#3a7ae0"/><rect x="18.8" y="0" width="1.2" height="17" fill="#3060d0"/><rect x="0" y="0" width="20" height="2" fill="url(#gtitle)"/><path d="M14.6 3.4 C12.6 3 11.3 3.8 10.9 5.6 L9.3 12.6 C8.9 14.4 7.8 15 5.8 14.6 M8.6 6.8 H13.4" fill="none" stroke="#1a2248" stroke-width="1.25"/></svg><div class="ft" style="left:29px;">fdopen</div></div>
<div class="frow" style="left:0;top:340px;background:#ffe6ff"><svg class="a" style="left:3px;top:0" width="20" height="17" viewBox="0 0 20 17"><rect x="0.5" y="0" width="19" height="17" fill="#e6fbfb"/><rect x="0" y="0" width="1.2" height="17" fill="#3a7ae0"/><rect x="18.8" y="0" width="1.2" height="17" fill="#3060d0"/><rect x="0" y="0" width="20" height="2" fill="url(#gtitle)"/><path d="M14.6 3.4 C12.6 3 11.3 3.8 10.9 5.6 L9.3 12.6 C8.9 14.4 7.8 15 5.8 14.6 M8.6 6.8 H13.4" fill="none" stroke="#1a2248" stroke-width="1.25"/></svg><div class="ft" style="left:29px;">pthread_getspecific</div></div>
<div class="frow" style="left:0;top:357px;background:#ffe6ff"><svg class="a" style="left:3px;top:0" width="20" height="17" viewBox="0 0 20 17"><rect x="0.5" y="0" width="19" height="17" fill="#e6fbfb"/><rect x="0" y="0" width="1.2" height="17" fill="#3a7ae0"/><rect x="18.8" y="0" width="1.2" height="17" fill="#3060d0"/><rect x="0" y="0" width="20" height="2" fill="url(#gtitle)"/><path d="M14.6 3.4 C12.6 3 11.3 3.8 10.9 5.6 L9.3 12.6 C8.9 14.4 7.8 15 5.8 14.6 M8.6 6.8 H13.4" fill="none" stroke="#1a2248" stroke-width="1.25"/></svg><div class="ft" style="left:29px;">wmemchr</div></div>
<div class="frow" style="left:0;top:374px;background:#ffe6ff"><svg class="a" style="left:3px;top:0" width="20" height="17" viewBox="0 0 20 17"><rect x="0.5" y="0" width="19" height="17" fill="#e6fbfb"/><rect x="0" y="0" width="1.2" height="17" fill="#3a7ae0"/><rect x="18.8" y="0" width="1.2" height="17" fill="#3060d0"/><rect x="0" y="0" width="20" height="2" fill="url(#gtitle)"/><path d="M14.6 3.4 C12.6 3 11.3 3.8 10.9 5.6 L9.3 12.6 C8.9 14.4 7.8 15 5.8 14.6 M8.6 6.8 H13.4" fill="none" stroke="#1a2248" stroke-width="1.25"/></svg><div class="ft" style="left:29px;">ioctl</div></div>
<div class="frow" style="left:0;top:391px;background:#ffe6ff"><svg class="a" style="left:3px;top:0" width="20" height="17" viewBox="0 0 20 17"><rect x="0.5" y="0" width="19" height="17" fill="#e6fbfb"/><rect x="0" y="0" width="1.2" height="17" fill="#3a7ae0"/><rect x="18.8" y="0" width="1.2" height="17" fill="#3060d0"/><rect x="0" y="0" width="20" height="2" fill="url(#gtitle)"/><path d="M14.6 3.4 C12.6 3 11.3 3.8 10.9 5.6 L9.3 12.6 C8.9 14.4 7.8 15 5.8 14.6 M8.6 6.8 H13.4" fill="none" stroke="#1a2248" stroke-width="1.25"/></svg><div class="ft" style="left:29px;">abort</div></div>
<div class="frow" style="left:0;top:408px;background:#ffe6ff"><svg class="a" style="left:3px;top:0" width="20" height="17" viewBox="0 0 20 17"><rect x="0.5" y="0" width="19" height="17" fill="#e6fbfb"/><rect x="0" y="0" width="1.2" height="17" fill="#3a7ae0"/><rect x="18.8" y="0" width="1.2" height="17" fill="#3060d0"/><rect x="0" y="0" width="20" height="2" fill="url(#gtitle)"/><path d="M14.6 3.4 C12.6 3 11.3 3.8 10.9 5.6 L9.3 12.6 C8.9 14.4 7.8 15 5.8 14.6 M8.6 6.8 H13.4" fill="none" stroke="#1a2248" stroke-width="1.25"/></svg><div class="ft" style="left:29px;">__cxa_atexit</div></div>
<div class="frow" style="left:0;top:425px;background:#ffe6ff"><svg class="a" style="left:3px;top:0" width="20" height="17" viewBox="0 0 20 17"><rect x="0.5" y="0" width="19" height="17" fill="#e6fbfb"/><rect x="0" y="0" width="1.2" height="17" fill="#3a7ae0"/><rect x="18.8" y="0" width="1.2" height="17" fill="#3060d0"/><rect x="0" y="0" width="20" height="2" fill="url(#gtitle)"/><path d="M14.6 3.4 C12.6 3 11.3 3.8 10.9 5.6 L9.3 12.6 C8.9 14.4 7.8 15 5.8 14.6 M8.6 6.8 H13.4" fill="none" stroke="#1a2248" stroke-width="1.25"/></svg><div class="ft" style="left:29px;">atoi</div></div>
<div class="frow" style="left:0;top:442px;background:#ffe6ff"><svg class="a" style="left:3px;top:0" width="20" height="17" viewBox="0 0 20 17"><rect x="0.5" y="0" width="19" height="17" fill="#e6fbfb"/><rect x="0" y="0" width="1.2" height="17" fill="#3a7ae0"/><rect x="18.8" y="0" width="1.2" height="17" fill="#3060d0"/><rect x="0" y="0" width="20" height="2" fill="url(#gtitle)"/><path d="M14.6 3.4 C12.6 3 11.3 3.8 10.9 5.6 L9.3 12.6 C8.9 14.4 7.8 15 5.8 14.6 M8.6 6.8 H13.4" fill="none" stroke="#1a2248" stroke-width="1.25"/></svg><div class="ft" style="left:29px;">vfprintf</div></div>
<div class="frow" style="left:0;top:459px;background:#ffe6ff"><svg class="a" style="left:3px;top:0" width="20" height="17" viewBox="0 0 20 17"><rect x="0.5" y="0" width="19" height="17" fill="#e6fbfb"/><rect x="0" y="0" width="1.2" height="17" fill="#3a7ae0"/><rect x="18.8" y="0" width="1.2" height="17" fill="#3060d0"/><rect x="0" y="0" width="20" height="2" fill="url(#gtitle)"/><path d="M14.6 3.4 C12.6 3 11.3 3.8 10.9 5.6 L9.3 12.6 C8.9 14.4 7.8 15 5.8 14.6 M8.6 6.8 H13.4" fill="none" stroke="#1a2248" stroke-width="1.25"/></svg><div class="ft" style="left:29px;">strcat</div></div>
<div class="frow" style="left:0;top:476px;background:#ffe6ff"><svg class="a" style="left:3px;top:0" width="20" height="17" viewBox="0 0 20 17"><rect x="0.5" y="0" width="19" height="17" fill="#e6fbfb"/><rect x="0" y="0" width="1.2" height="17" fill="#3a7ae0"/><rect x="18.8" y="0" width="1.2" height="17" fill="#3060d0"/><rect x="0" y="0" width="20" height="2" fill="url(#gtitle)"/><path d="M14.6 3.4 C12.6 3 11.3 3.8 10.9 5.6 L9.3 12.6 C8.9 14.4 7.8 15 5.8 14.6 M8.6 6.8 H13.4" fill="none" stroke="#1a2248" stroke-width="1.25"/></svg><div class="ft" style="left:29px;">fseek</div></div>
<div class="frow" style="left:0;top:493px;background:#ffe6ff"><svg class="a" style="left:3px;top:0" width="20" height="17" viewBox="0 0 20 17"><rect x="0.5" y="0" width="19" height="17" fill="#e6fbfb"/><rect x="0" y="0" width="1.2" height="17" fill="#3a7ae0"/><rect x="18.8" y="0" width="1.2" height="17" fill="#3060d0"/><rect x="0" y="0" width="20" height="2" fill="url(#gtitle)"/><path d="M14.6 3.4 C12.6 3 11.3 3.8 10.9 5.6 L9.3 12.6 C8.9 14.4 7.8 15 5.8 14.6 M8.6 6.8 H13.4" fill="none" stroke="#1a2248" stroke-width="1.25"/></svg><div class="ft" style="left:29px;">setvbuf</div></div>
<div class="frow" style="left:0;top:510px;background:#ffe6ff"><svg class="a" style="left:3px;top:0" width="20" height="17" viewBox="0 0 20 17"><rect x="0.5" y="0" width="19" height="17" fill="#e6fbfb"/><rect x="0" y="0" width="1.2" height="17" fill="#3a7ae0"/><rect x="18.8" y="0" width="1.2" height="17" fill="#3060d0"/><rect x="0" y="0" width="20" height="2" fill="url(#gtitle)"/><path d="M14.6 3.4 C12.6 3 11.3 3.8 10.9 5.6 L9.3 12.6 C8.9 14.4 7.8 15 5.8 14.6 M8.6 6.8 H13.4" fill="none" stroke="#1a2248" stroke-width="1.25"/></svg><div class="ft" style="left:29px;">exit</div></div>
<div class="frow" style="left:0;top:527px;background:#ffe6ff"><svg class="a" style="left:3px;top:0" width="20" height="17" viewBox="0 0 20 17"><rect x="0.5" y="0" width="19" height="17" fill="#e6fbfb"/><rect x="0" y="0" width="1.2" height="17" fill="#3a7ae0"/><rect x="18.8" y="0" width="1.2" height="17" fill="#3060d0"/><rect x="0" y="0" width="20" height="2" fill="url(#gtitle)"/><path d="M14.6 3.4 C12.6 3 11.3 3.8 10.9 5.6 L9.3 12.6 C8.9 14.4 7.8 15 5.8 14.6 M8.6 6.8 H13.4" fill="none" stroke="#1a2248" stroke-width="1.25"/></svg><div class="ft" style="left:29px;">memcmp</div></div>
<div class="frow" style="left:0;top:544px;background:#ffe6ff"><svg class="a" style="left:3px;top:0" width="20" height="17" viewBox="0 0 20 17"><rect x="0.5" y="0" width="19" height="17" fill="#e6fbfb"/><rect x="0" y="0" width="1.2" height="17" fill="#3a7ae0"/><rect x="18.8" y="0" width="1.2" height="17" fill="#3060d0"/><rect x="0" y="0" width="20" height="2" fill="url(#gtitle)"/><path d="M14.6 3.4 C12.6 3 11.3 3.8 10.9 5.6 L9.3 12.6 C8.9 14.4 7.8 15 5.8 14.6 M8.6 6.8 H13.4" fill="none" stroke="#1a2248" stroke-width="1.25"/></svg><div class="ft" style="left:29px;">write</div></div>
<div class="frow" style="left:0;top:561px;background:#ffe6ff"><svg class="a" style="left:3px;top:0" width="20" height="17" viewBox="0 0 20 17"><rect x="0.5" y="0" width="19" height="17" fill="#e6fbfb"/><rect x="0" y="0" width="1.2" height="17" fill="#3a7ae0"/><rect x="18.8" y="0" width="1.2" height="17" fill="#3060d0"/><rect x="0" y="0" width="20" height="2" fill="url(#gtitle)"/><path d="M14.6 3.4 C12.6 3 11.3 3.8 10.9 5.6 L9.3 12.6 C8.9 14.4 7.8 15 5.8 14.6 M8.6 6.8 H13.4" fill="none" stroke="#1a2248" stroke-width="1.25"/></svg><div class="ft" style="left:29px;font-weight:normal;font-size:13.33px;line-height:20.5px;">__errno</div></div>
<div class="frow" style="left:0;top:578px;background:#ffe6ff"><svg class="a" style="left:3px;top:0" width="20" height="17" viewBox="0 0 20 17"><rect x="0.5" y="0" width="19" height="17" fill="#e6fbfb"/><rect x="0" y="0" width="1.2" height="17" fill="#3a7ae0"/><rect x="18.8" y="0" width="1.2" height="17" fill="#3060d0"/><rect x="0" y="0" width="20" height="2" fill="url(#gtitle)"/><path d="M14.6 3.4 C12.6 3 11.3 3.8 10.9 5.6 L9.3 12.6 C8.9 14.4 7.8 15 5.8 14.6 M8.6 6.8 H13.4" fill="none" stroke="#1a2248" stroke-width="1.25"/></svg><div class="ft" style="left:29px;">wcrtomb</div></div>
<div class="frow" style="left:0;top:595px;background:#f0f0f0"><svg class="a" style="left:3px;top:0" width="20" height="17" viewBox="0 0 20 17"><rect x="0.5" y="0" width="19" height="17" fill="#a6d2f0"/><rect x="0" y="0" width="1.2" height="17" fill="#3a7ae0"/><rect x="18.8" y="0" width="1.2" height="17" fill="#3060d0"/><rect x="0" y="0" width="20" height="2" fill="url(#gtitle)"/><path d="M14.6 3.4 C12.6 3 11.3 3.8 10.9 5.6 L9.3 12.6 C8.9 14.4 7.8 15 5.8 14.6 M8.6 6.8 H13.4" fill="none" stroke="#1a2248" stroke-width="1.25"/></svg><div class="ft" style="left:29px;">ungetc</div></div>
<div class="frow" style="left:0;top:612px;background:#ffe6ff"><svg class="a" style="left:3px;top:0" width="20" height="17" viewBox="0 0 20 17"><rect x="0.5" y="0" width="19" height="17" fill="#e6fbfb"/><rect x="0" y="0" width="1.2" height="17" fill="#3a7ae0"/><rect x="18.8" y="0" width="1.2" height="17" fill="#3060d0"/><rect x="0" y="0" width="20" height="2" fill="url(#gtitle)"/><path d="M14.6 3.4 C12.6 3 11.3 3.8 10.9 5.6 L9.3 12.6 C8.9 14.4 7.8 15 5.8 14.6 M8.6 6.8 H13.4" fill="none" stroke="#1a2248" stroke-width="1.25"/></svg><div class="ft" style="left:29px;">pthread_mutex_lock</div></div>
</div>
<div class="a" style="left:1px;top:791px;width:360px;height:1px;background:#fff"></div>
<svg class="a" style="left:367px;top:142px" width="10" height="8"><path d="M0 7 L5 1 L10 7 Z" fill="#dadada"/></svg>
<svg class="a" style="left:367px;top:777px" width="10" height="8"><path d="M0 1 L5 7 L10 1 Z" fill="#dadada"/></svg>
<div class="a" style="left:369px;top:483px;width:6px;height:171px;background:#858585"></div>
<div class="a" style="left:22px;top:799px;width:96px;height:6px;background:#858585"></div>
<div class="a sans" style="left:6px;top:817.5px;font-size:16px;line-height:20px;white-space:pre">Line 104 of 128</div>
<div class="a" style="left:387px;top:103px;width:1476px;height:735px;background:#fff"></div>
<div class="a" style="left:387px;top:103px;width:1476px;height:27px;background:#f0f0f0"></div>
<div class="a" style="left:644px;top:129px;width:1219px;height:1px;background:#a0a0a0"></div>
<div class="a" style="left:387px;top:102px;width:257px;height:28px;background:#f8f8f8;border:1px solid #e8e8e8;border-bottom:none"></div>
<div class="tab" style="left:644px;width:254px;border-left:1px solid #e0e0e0"></div>
<div class="tabt" style="left:728px;top:104px">Hex View-1</div>
<div class="cls" style="left:865px;top:110px"></div>
<div class="tab" style="left:898px;width:255px;border-left:1px solid #e0e0e0"></div>
<div class="tabt" style="left:984px;top:104px">Structures</div>
<div class="cls" style="left:1120px;top:110px"></div>
<div class="tab" style="left:1153px;width:256px;border-left:1px solid #e0e0e0"></div>
<div class="tabt" style="left:1259px;top:104px">Enums</div>
<div class="cls" style="left:1376px;top:110px"></div>
<div class="tab" style="left:1409px;width:256px;border-left:1px solid #e0e0e0"></div>
<div class="tabt" style="left:1507px;top:104px">Imports</div>
<div class="cls" style="left:1632px;top:110px"></div>
<div class="tab" style="left:1665px;width:198px;border-left:1px solid #e0e0e0"></div>
<div class="tabt" style="left:1762px;top:104px">Exports</div>
<div class="tabt" style="left:473px;top:103px">IDA View-A</div>
<div class="cls" style="left:610px;top:109px;background:#e06848"></div>
<svg class="a" style="left:402px;top:107px;overflow:visible" width="16" height="16" viewBox="0 0 16 16"><rect x="0.5" y="0.5" width="13" height="13" fill="url(#gwin)" stroke="#2f6fe0" stroke-width="1"/><rect x="0" y="0" width="14" height="2.5" fill="url(#gtitle)"/><rect x="5.5" y="3.5" width="10" height="12" fill="#fff" stroke="#1f5f9f"/><path d="M7 5.5 H11 M9 7.5 H14 M9 9.5 H14 M7 11.5 H11 M9 13.5 H14" stroke="#3a4048" stroke-width="1.1"/></svg><svg class="a" style="left:658px;top:108px;overflow:visible" width="15" height="15" viewBox="0 0 15 15"><rect x="0.5" y="0.5" width="14" height="14" fill="#fff" stroke="#2f6fe0" stroke-width="1"/><rect x="0" y="0" width="15" height="2.5" fill="url(#gtitle)"/><path d="M7.5 3.8 L11.3 6 V10.4 L7.5 12.6 L3.7 10.4 V6 Z" fill="#dde8ff" stroke="#2020f0" stroke-width="1.3"/></svg><svg class="a" style="left:913px;top:108px;overflow:visible" width="15" height="15" viewBox="0 0 15 15"><rect x="0.5" y="0.5" width="14" height="14" fill="url(#gwin)" stroke="#2f6fe0" stroke-width="1"/><rect x="0" y="0" width="15" height="2.5" fill="url(#gtitle)"/><path d="M4 13 L7 4.5 L10.5 13 M5.2 10 H9.2" fill="none" stroke="#0a2a60" stroke-width="1.6"/></svg><svg class="a" style="left:1169px;top:108px;overflow:visible" width="16" height="15" viewBox="0 0 16 15"><rect x="0.5" y="0.5" width="15" height="14" fill="#fff" stroke="#2f6fe0" stroke-width="1"/><rect x="0" y="0" width="16" height="2.5" fill="url(#gtitle)"/><g fill="#00e0ff" stroke="#002080" stroke-width="0.9"><path d="M5.5 3.2 L7 4.7 L5.5 6.2 L4 4.7 Z"/><path d="M5.5 7.2 L7 8.7 L5.5 10.2 L4 8.7 Z"/><path d="M5.5 11.2 L7 12.7 L5.5 14.2 L4 12.7 Z"/></g><path d="M8.5 4.7 H11.5 M8.5 8.7 H11.5 M8.5 12.7 H11.5" stroke="#0040c0" stroke-width="1.2"/></svg><svg class="a" style="left:1424px;top:108px;overflow:visible" width="16" height="16" viewBox="0 0 16 16"><rect x="0.5" y="0.5" width="14" height="14" fill="url(#gwin)" stroke="#2f6fe0" stroke-width="1"/><rect x="0" y="0" width="15" height="2.5" fill="url(#gtitle)"/><rect x="6.5" y="5.5" width="9" height="10" fill="#fff" stroke="#2a5a9a"/><path d="M8.5 7.8 H12.5 M8.5 9.8 H12.5 M8.5 11.8 H12.5 M8.5 13.8 H12.5" stroke="#0010b0" stroke-width="1.1"/><path d="M1 5 L5 8 L8.5 7.8 L6 10.5 L3.5 12 L4 9.5 Z" fill="#20c020" stroke="#004000" stroke-width="0.8"/></svg><svg class="a" style="left:1680px;top:108px;overflow:visible" width="16" height="16" viewBox="0 0 16 16"><g transform="translate(1,0)"><rect x="0.5" y="0.5" width="14" height="14" fill="url(#gwin)" stroke="#2f6fe0" stroke-width="1"/><rect x="0" y="0" width="15" height="2.5" fill="url(#gtitle)"/></g><rect x="0.5" y="5.5" width="9" height="10" fill="#fff" stroke="#2a5a9a"/><path d="M3 7.8 H7 M3 9.8 H7 M3 11.8 H7 M3 13.8 H7" stroke="#0010b0" stroke-width="1.1"/><path d="M7.5 11 C8 8.5 9.5 7.8 11 7.8 L10.5 5.5 L14 8 L10.5 11 L11 9.5 C9.5 9.5 8.5 10 7.5 11 Z" fill="#20c020" stroke="#004000" stroke-width="0.8"/></svg><svg class="a" style="left:4px;top:108px;overflow:visible" width="16" height="16" viewBox="0 0 16 16"><rect x="0.5" y="0.5" width="15" height="15" fill="#f0ffff" stroke="#2f6fe0" stroke-width="1"/><rect x="0" y="0" width="16" height="2.5" fill="url(#gtitle)"/><path d="M12 3.8 C10.2 3.4 9.2 4.2 8.8 6 L7.4 12.2 C7 13.8 6 14.2 4.2 13.8 M6.3 7.2 H11" fill="none" stroke="#1a2650" stroke-width="1.2"/></svg>
<div class="a" style="left:462px;top:130px;width:5px;height:708px;background:#f0f0f0"></div>
<div class="a" style="left:467px;top:131px;width:1396px;height:20px;background:#e4e4e4;border-top:1px solid #d2d2d2;border-left:1px solid #d2d2d2"></div>
<div class="crow" style="top:131px;padding-left:16px"><span style="color:#0000ff">seg000:000000000002C09D</span> <span style="color:#0000ff">12</span>                            <span style="color:#000080">DCB</span> <span style="color:#008040">0x12</span></div>
<div class="crow" style="top:151px;padding-left:16px"><span style="color:#808000">seg000:000000000002C09E</span> <span style="color:#0000ff">52</span>                            <span style="color:#000080">DCB</span> <span style="color:#008040">0x52</span> <span style="color:#808080">; R</span></div>
<div class="crow" style="top:171px;padding-left:16px"><span style="color:#808000">seg000:000000000002C09F</span> <span style="color:#0000ff">F1</span>                            <span style="color:#000080">DCB</span> <span style="color:#008040">0xF1</span></div>
<div class="crow" style="top:191px;padding-left:16px"><span style="color:#808000">seg000:000000000002C0A0</span> <span style="color:#0000ff">66</span>                            <span style="color:#000080">DCB</span> <span style="color:#008040">0x66</span> <span style="color:#808080">; f</span></div>
<div class="crow" style="top:211px;padding-left:16px"><span style="color:#808000">seg000:000000000002C0A1</span> <span style="color:#0000ff">2E</span>                            <span style="color:#000080">DCB</span> <span style="color:#008040">0x2E</span> <span style="color:#808080">; .</span></div>
<div class="crow" style="top:231px;padding-left:16px"><span style="color:#808000">seg000:000000000002C0A2</span> <span style="color:#0000ff">01</span>                            <span style="color:#000080">DCB</span> <span style="color:#008040">   1</span></div>
<div class="crow" style="top:251px;padding-left:16px"><span style="color:#808000">seg000:000000000002C0A3</span> <span style="color:#0000ff">22</span>                            <span style="color:#000080">DCB</span> <span style="color:#008040">0x22</span> <span style="color:#808080">; &quot;</span></div>
<div class="crow" style="top:271px;padding-left:16px"><span style="color:#808000">seg000:000000000002C0A4</span> <span style="color:#0000ff">61</span>                            <span style="color:#000080">DCB</span> <span style="color:#008040">0x61</span> <span style="color:#808080">; a</span></div>
<div class="crow" style="top:291px;padding-left:16px"><span style="color:#808000">seg000:000000000002C0A5</span> <span style="color:#0000ff">E7</span>                            <span style="color:#000080">DCB</span> <span style="color:#008040">0xE7</span></div>
<div class="crow" style="top:311px;padding-left:16px"><span style="color:#808000">seg000:000000000002C0A6</span> <span style="color:#0000ff">A0</span>                            <span style="color:#000080">DCB</span> <span style="color:#008040">0xA0</span></div>
<div class="crow" style="top:331px;padding-left:16px"><span style="color:#808000">seg000:000000000002C0A7</span> <span style="color:#0000ff">13</span>                            <span style="color:#000080">DCB</span> <span style="color:#008040">0x13</span></div>
<div class="crow" style="top:351px;padding-left:16px"><span style="color:#808000">seg000:000000000002C0A8</span> <span style="color:#0000ff">21</span>                            <span style="color:#000080">DCB</span> <span style="color:#008040">0x21</span> <span style="color:#808080">; !</span></div>
<div class="crow" style="top:371px;padding-left:16px"><span style="color:#808000">seg000:000000000002C0A9</span> <span style="color:#0000ff">0F</span>                            <span style="color:#000080">DCB</span> <span style="color:#008040"> 0xF</span></div>
<div class="crow" style="top:391px;padding-left:16px"><span style="color:#808000">seg000:000000000002C0AA</span> <span style="color:#0000ff">1D</span>                            <span style="color:#000080">DCB</span> <span style="color:#008040">0x1D</span></div>
<div class="crow" style="top:411px;padding-left:16px"><span style="color:#808000">seg000:000000000002C0AB</span> <span style="color:#0000ff">0C</span>                            <span style="color:#000080">DCB</span> <span style="color:#008040"> 0xC</span></div>
<div class="crow" style="top:431px;padding-left:16px"><span style="color:#808000">seg000:000000000002C0AC</span> <span style="color:#0000ff">4E</span>                            <span style="color:#000080">DCB</span> <span style="color:#008040">0x4E</span> <span style="color:#808080">; N</span></div>
<div class="crow" style="top:451px;padding-left:16px"><span style="color:#808000">seg000:000000000002C0AD</span> <span style="color:#0000ff">A6</span>                            <span style="color:#000080">DCB</span> <span style="color:#008040">0xA6</span></div>
<div class="crow" style="top:471px;padding-left:16px"><span style="color:#808000">seg000:000000000002C0AE</span> <span style="color:#0000ff">00</span>                            <span style="color:#000080">DCB</span> <span style="color:#008040">   0</span></div>
<div class="crow" style="top:491px;padding-left:16px"><span style="color:#808000">seg000:000000000002C0AF</span> <span style="color:#0000ff">49</span>                            <span style="color:#000080">DCB</span> <span style="color:#008040">0x49</span> <span style="color:#808080">; I</span></div>
<div class="crow" style="top:511px;padding-left:16px"><span style="color:#808000">seg000:000000000002C0B0</span> <span style="color:#0000ff">45</span>                            <span style="color:#000080">DCB</span> <span style="color:#008040">0x45</span> <span style="color:#808080">; E</span></div>
<div class="crow" style="top:531px;padding-left:16px"><span style="color:#808000">seg000:000000000002C0B1</span> <span style="color:#0000ff">27</span>                            <span style="color:#000080">DCB</span> <span style="color:#008040">0x27</span> <span style="color:#808080">; '</span></div>
<div class="crow" style="top:551px;padding-left:16px"><span style="color:#808000">seg000:000000000002C0B2</span> <span style="color:#0000ff">A4</span>                            <span style="color:#000080">DCB</span> <span style="color:#008040">0xA4</span></div>
<div class="crow" style="top:571px;padding-left:16px"><span style="color:#808000">seg000:000000000002C0B3</span> <span style="color:#0000ff">29</span>                            <span style="color:#000080">DCB</span> <span style="color:#008040">0x29</span> <span style="color:#808080">; )</span></div>
<div class="crow" style="top:591px;padding-left:16px"><span style="color:#808000">seg000:000000000002C0B4</span> <span style="color:#0000ff">17</span>                            <span style="color:#000080">DCB</span> <span style="color:#008040">0x17</span></div>
<div class="crow" style="top:611px;padding-left:16px"><span style="color:#808000">seg000:000000000002C0B5</span> <span style="color:#0000ff">53</span>                            <span style="color:#000080">DCB</span> <span style="color:#008040">0x53</span> <span style="color:#808080">; S</span></div>
<div class="crow" style="top:631px;padding-left:16px"><span style="color:#808000">seg000:000000000002C0B6</span> <span style="color:#0000ff">A6</span>                            <span style="color:#000080">DCB</span> <span style="color:#008040">0xA6</span></div>
<div class="crow" style="top:651px;padding-left:16px"><span style="color:#808000">seg000:000000000002C0B7</span> <span style="color:#0000ff">4F</span>                            <span style="color:#000080">DCB</span> <span style="color:#008040">0x4F</span> <span style="color:#808080">; O</span></div>
<div class="crow" style="top:671px;padding-left:16px"><span style="color:#808000">seg000:000000000002C0B8</span> <span style="color:#0000ff">FC</span>                            <span style="color:#000080">DCB</span> <span style="color:#008040">0xFC</span></div>
<div class="crow" style="top:691px;padding-left:16px"><span style="color:#808000">seg000:000000000002C0B9</span> <span style="color:#0000ff">A7</span>                            <span style="color:#000080">DCB</span> <span style="color:#008040">0xA7</span></div>
<div class="crow" style="top:711px;padding-left:16px"><span style="color:#808000">seg000:000000000002C0BA</span> <span style="color:#0000ff">47</span>                            <span style="color:#000080">DCB</span> <span style="color:#008040">0x47</span> <span style="color:#808080">; G</span></div>
<div class="crow" style="top:731px;padding-left:16px"><span style="color:#808000">seg000:000000000002C0BB</span> <span style="color:#0000ff">71</span>                            <span style="color:#000080">DCB</span> <span style="color:#008040">0x71</span> <span style="color:#808080">; q</span></div>
<div class="crow" style="top:751px;padding-left:16px"><span style="color:#808000">seg000:000000000002C0BC</span> <span style="color:#0000ff">34</span>                            <span style="color:#000080">DCB</span> <span style="color:#008040">0x34</span> <span style="color:#808080">; 4</span></div>
<div class="crow" style="top:771px;padding-left:16px"><span style="color:#808000">seg000:000000000002C0BD</span> <span style="color:#0000ff">48</span>                            <span style="color:#000080">DCB</span> <span style="color:#008040">0x48</span> <span style="color:#808080">; H</span></div>
<div class="dot" style="top:134px"></div>
<div class="dot" style="top:154px"></div>
<div class="dot" style="top:174px"></div>
<div class="dot" style="top:194px"></div>
<div class="dot" style="top:214px"></div>
<div class="dot" style="top:234px"></div>
<div class="dot" style="top:254px"></div>
<div class="dot" style="top:274px"></div>
<div class="dot" style="top:294px"></div>
<div class="dot" style="top:314px"></div>
<div class="dot" style="top:334px"></div>
<div class="dot" style="top:354px"></div>
<div class="dot" style="top:374px"></div>
<div class="dot" style="top:394px"></div>
<div class="dot" style="top:414px"></div>
<div class="dot" style="top:434px"></div>
<div class="dot" style="top:454px"></div>
<div class="dot" style="top:474px"></div>
<div class="dot" style="top:494px"></div>
<div class="dot" style="top:514px"></div>
<div class="dot" style="top:534px"></div>
<div class="dot" style="top:554px"></div>
<div class="dot" style="top:574px"></div>
<div class="dot" style="top:594px"></div>
<div class="dot" style="top:614px"></div>
<div class="dot" style="top:634px"></div>
<div class="dot" style="top:654px"></div>
<div class="dot" style="top:674px"></div>
<div class="dot" style="top:694px"></div>
<div class="dot" style="top:714px"></div>
<div class="dot" style="top:734px"></div>
<div class="dot" style="top:754px"></div>
<div class="dot" style="top:774px"></div>
<div class="dot" style="top:794px"></div>
<div class="a" style="left:483px;top:131px;width:2px;height:19px;background:#000"></div>
<div class="a" style="left:467px;top:794px;width:1396px;height:22px;background:#f0f0f0"></div>
<div class="a" style="left:467px;top:816px;width:1396px;height:1px;background:#fff"></div>
<div class="a" style="left:467px;top:817px;width:1396px;height:19px;background:#f0f0f0"></div>
<div class="a mono" style="left:470px;top:795.5px;font-size:15px;line-height:22px;white-space:pre">0002C09D</div>
<div class="a mono" style="left:548px;top:795.5px;font-size:15px;line-height:22px;white-space:pre">000000000002C09D: seg000:000000000002C09D</div>
<div class="a mono" style="left:924px;top:795.5px;font-size:15px;line-height:22px;white-space:pre;letter-spacing:-0.15px">(Synchronized with Hex View-1)</div>
<div class="a" style="left:542px;top:797px;width:1px;height:17px;background:#d4d4d4"></div>
<div class="a" style="left:917px;top:797px;width:1px;height:17px;background:#d4d4d4"></div>
<div class="a" style="left:1193px;top:797px;width:1px;height:17px;background:#d4d4d4"></div>
<div class="a" style="left:488px;top:824px;width:909px;height:6px;background:#858585"></div>
<div class="a" style="left:466px;top:837px;width:1397px;height:1px;background:#0a5cc0"></div>
<svg class="a" style="left:1690px;top:755px;overflow:visible" width="170" height="70" viewBox="0 0 170 70"><g fill="none" stroke="#ffffff" stroke-width="2.6" stroke-linecap="round" stroke-linejoin="round" style="filter:drop-shadow(1px 1.5px 1px rgba(0,0,0,0.38))"><path d="M34.20 31.00 L34.20 8.00 M34.20 20.50 L25.14 13.42 M34.20 20.50 L43.26 13.42 M38.53 38.50 L58.45 50.00 M47.62 43.75 L58.29 39.44 M47.62 43.75 L49.22 55.14 M34.20 41.00 L34.20 64.00 M34.20 51.50 L43.26 58.58 M34.20 51.50 L25.14 58.58 M29.87 38.50 L9.95 50.00 M20.78 43.75 L19.18 55.14 M20.78 43.75 L10.11 39.44 M29.87 33.50 L9.95 22.00 M20.78 28.25 L10.11 32.56 M20.78 28.25 L19.18 16.86"/><path d="M34.20 31.00 L38.53 33.50 L38.53 38.50 L34.20 41.00 L29.87 38.50 L29.87 33.50 Z" stroke-width="2.2"/><path d="M72 16 H109 M74 23.3 H105 M70.3 29.7 H111.8 M89.4 17.8 L72.5 44.3 M80.3 36 H102 Q106.3 36 106.3 40.3 V52.3 Q106.3 56.6 102 56.6 H84.6 Q80.3 56.6 80.3 52.3 Z M80.3 42.9 H102 M80.3 48.4 H102"/><path d="M117.2 16 H156.5 M118.6 35 V26.4 Q118.6 22.4 122.6 22.4 H151 Q155 22.4 155 26.4 V35 M137.8 22.4 V35 M122 29.2 H133.7 M122 33.8 H133.7 M141.4 29.2 H152 M141.4 33.8 H152 M119.5 41.5 H150 Q154 41.5 154 45.5 V52.6 Q154 56.6 150 56.6 H118.6 M120.4 48.4 H154"/></g><g fill="none" stroke="#ffffff" stroke-width="2.4" stroke-linecap="round" style="filter:drop-shadow(0.5px 0.5px 0.6px rgba(0,0,0,0.3))"><path d="M38.53 33.50 L58.45 22.00 M47.62 28.25 L49.22 16.86 M47.62 28.25 L58.29 32.56"/></g></svg>
</body></html>
